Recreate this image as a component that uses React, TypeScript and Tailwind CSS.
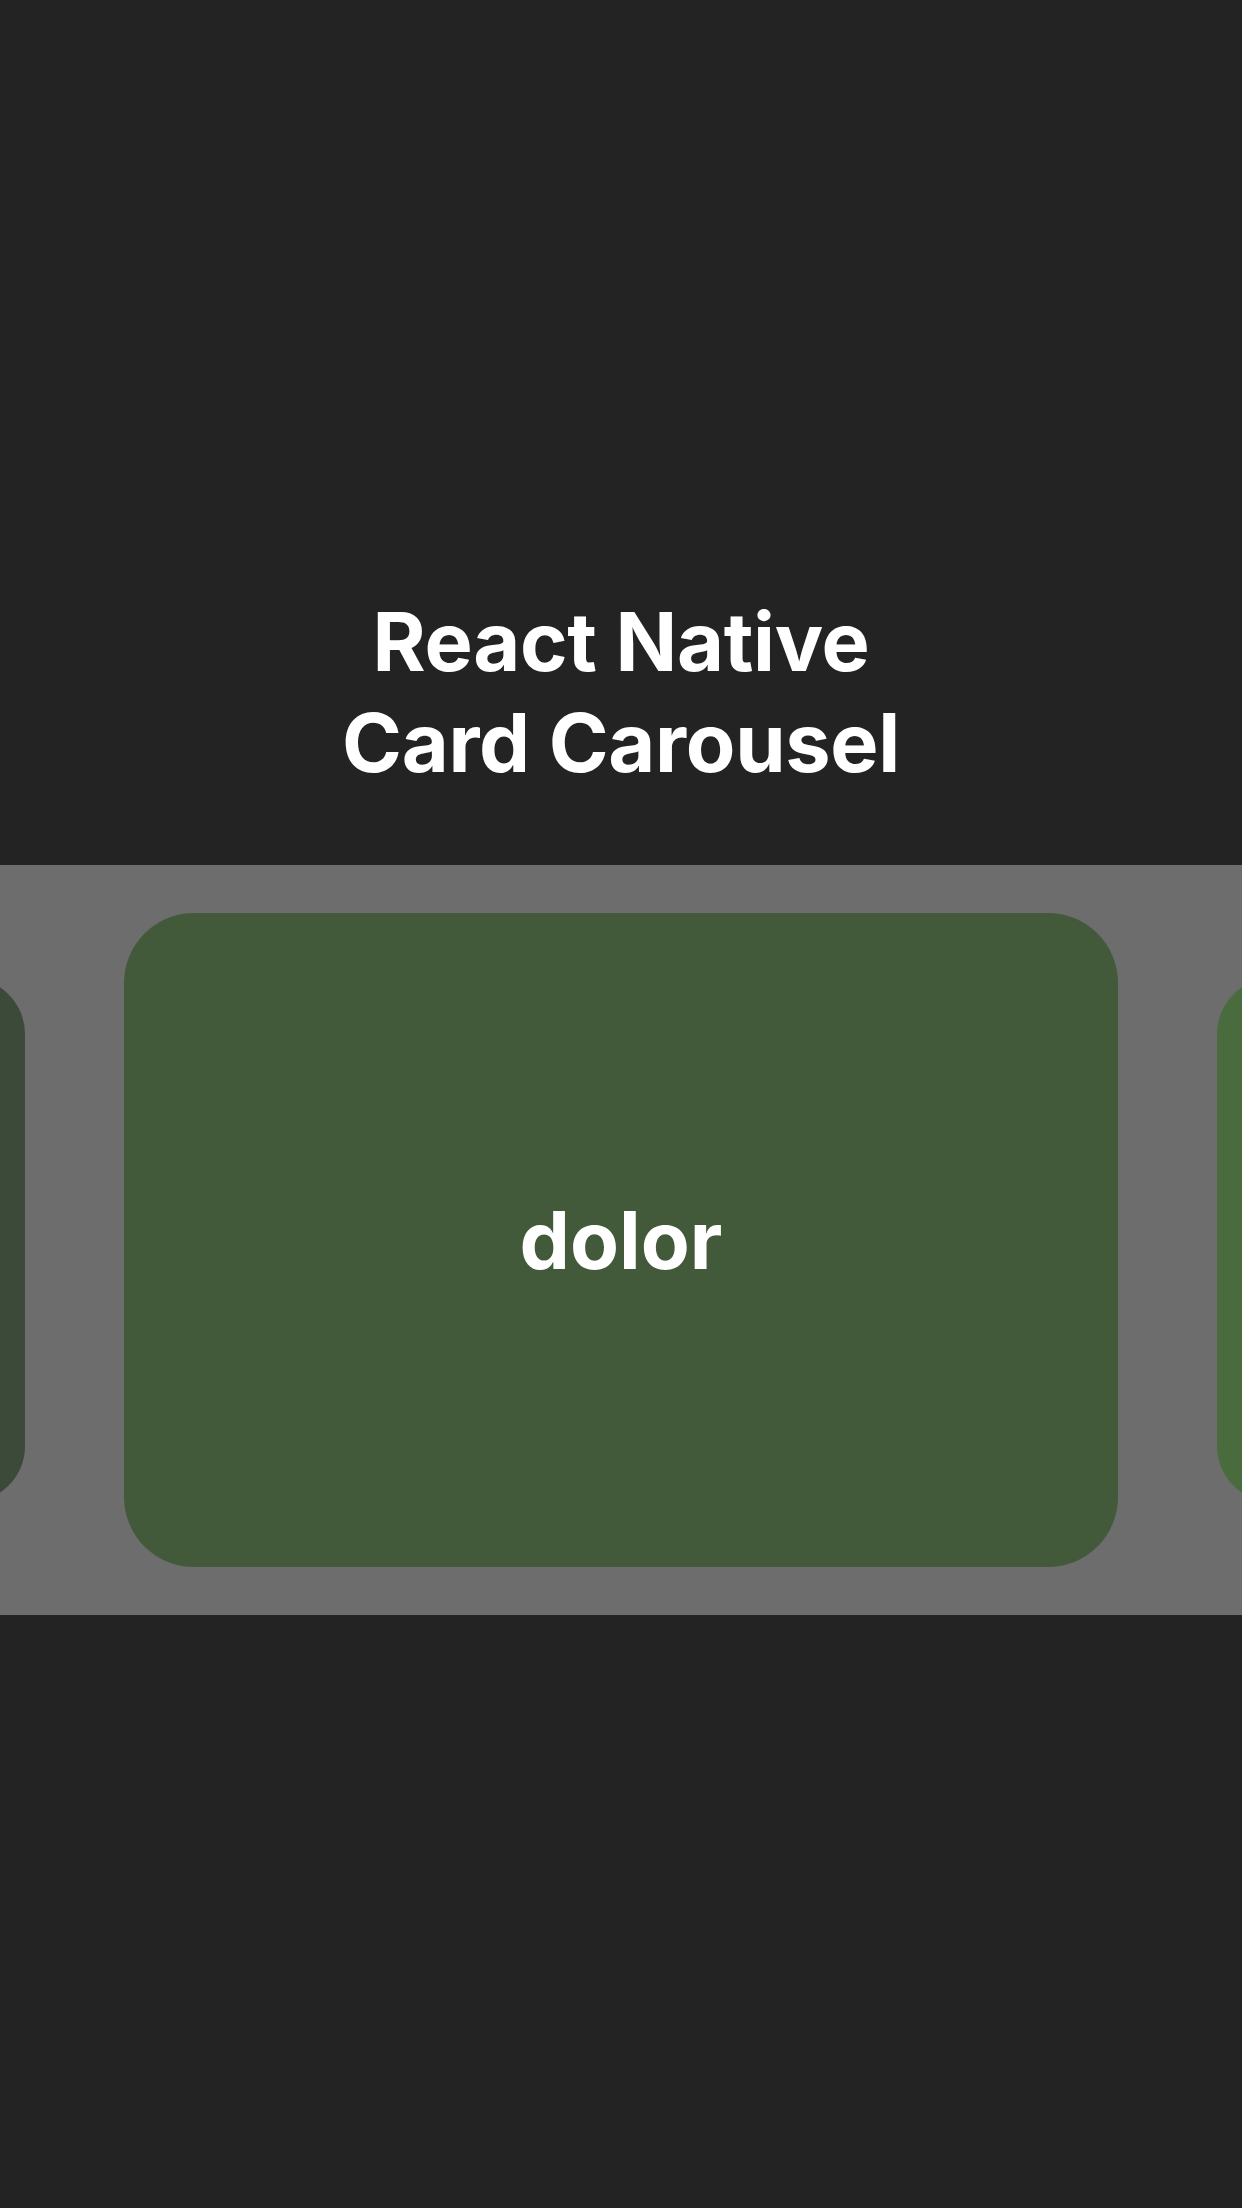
const cards = [
  { label: 'ipsum', main: false, color: 'bg-[#3c4a39]' },
  { label: 'dolor', main: true, color: 'bg-[#435a3a]' },
  { label: 'sit', main: false, color: 'bg-[#4a6b3e]' },
]

const App = () => {
  return (
    <div className="min-h-[2208px] w-full bg-[#232323] flex flex-col pt-[592px]" style={{ fontFamily: 'Inter, "Noto Sans", sans-serif' }}>
      {/* Title */}
      <h1 className="text-center text-white font-bold text-[81px] leading-[101px] tracking-[-0.3px]">
        React Native
        <br />
        Card Carousel
      </h1>

      {/* Carousel band */}
      <div className="mt-[71px] h-[750px] bg-[#6d6d6d] overflow-hidden flex items-center justify-center gap-[99px]">
        {cards.map((card) =>
          card.main ? (
            <div
              key={card.label}
              className={`shrink-0 w-[994px] h-[654px] rounded-[70px] ${card.color} flex items-center justify-center`}
            >
              <span className="text-white font-bold text-[80px] leading-none">{card.label}</span>
            </div>
          ) : (
            // side cards are scaled down and mostly off screen
            <div key={card.label} className={`shrink-0 w-[765px] h-[524px] rounded-[56px] ${card.color}`} />
          )
        )}
      </div>
    </div>
  )
}

export default App
